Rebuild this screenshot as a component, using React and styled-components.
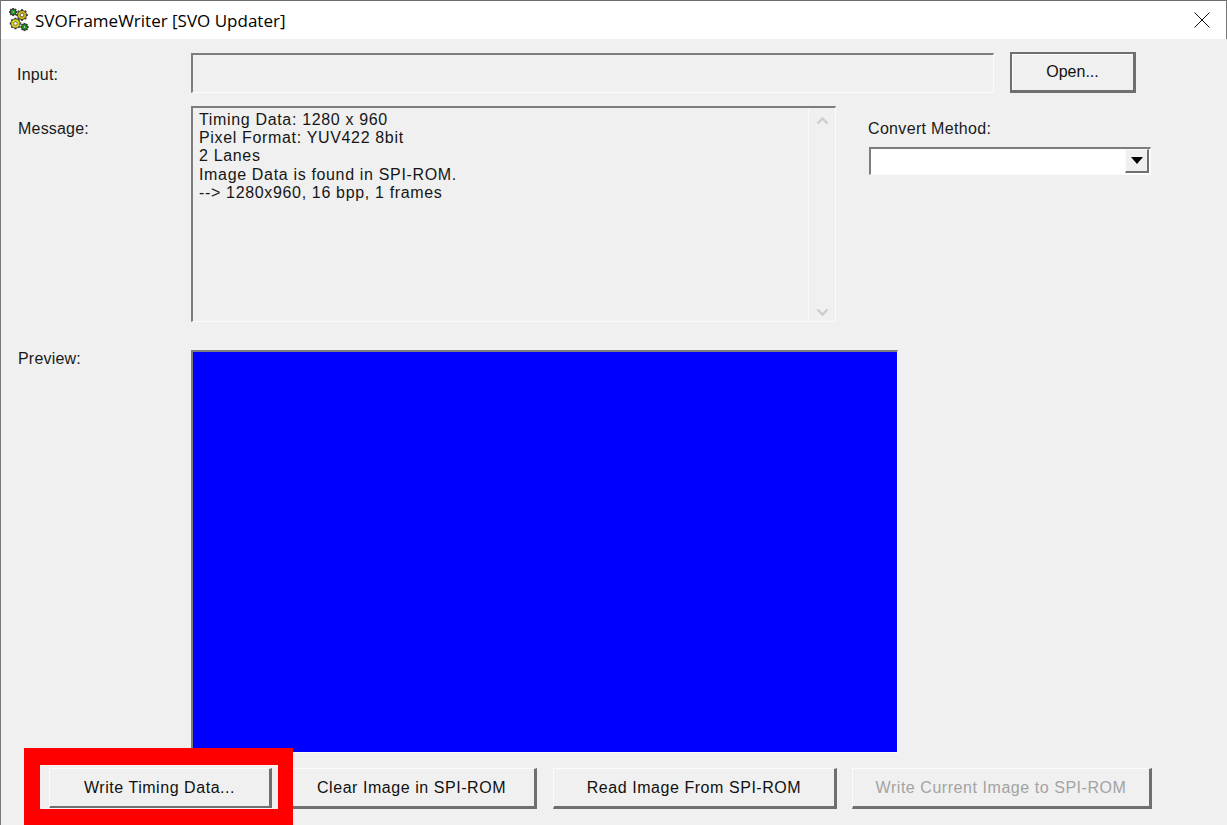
import React from "react";
import styled, { createGlobalStyle } from "styled-components";

const Global = createGlobalStyle`
  html, body { margin: 0; padding: 0; height: 825px; overflow: hidden; background: #f0f0f0; }
  #root { height: 825px; }
  * { box-sizing: border-box; }
`;

const Win = styled.div`
  width: 1227px; height: 825px; overflow: hidden; display: flex; flex-direction: column;
  background: #f0f0f0; border-left: 1px solid #777;
  font-family: "Liberation Sans", Arial, sans-serif; font-size: 16px; color: #1a1a1a;
`;
const TitleBar = styled.div`
  height: 39px; flex: none; background: #fff; border-top: 1px solid #6d6d6d; border-right: 1px solid #777;
  display: flex; align-items: center; padding: 0 16px 0 7px; gap: 5px;
`;
const Title = styled.div`
  flex: 1; font-family: "Open Sans", "Noto Sans", sans-serif; font-size: 17px; color: #000; padding-top: 1px;
`;
const Client = styled.div`
  flex: 1; display: flex; flex-direction: column; padding: 14px 0 0 16px; position: relative;
`;
const Row = styled.div`
  display: flex; align-items: flex-start;
`;
const Label = styled.div`
  width: 174px; flex: none; height: 20px; line-height: 20px; letter-spacing: 0.2px; margin-top: ${p => p.$top}px; padding-left: ${p => p.$pad || 0}px;
`;
const Sunken = styled.div`
  border-style: solid; border-width: 2px 1px 1px 2px; border-color: #7d7d7d #fbfbfb #fbfbfb #7d7d7d;
`;
const InputField = styled(Sunken)`
  width: 803px; height: 40px; background: #f0f0f0;
`;
const RaisedButton = styled.button`
  font: inherit; font-size: 16px; letter-spacing: 0.55px; height: 41px; padding: 0; margin: 0;
  width: ${p => p.$w}px; background: #f0f0f0; color: ${p => (p.disabled ? "#a3a3a3" : "#111")};
  border-style: solid; border-width: 1px 3px 3px 1px; border-color: #fbfbfb #6f6f6f #6f6f6f #fbfbfb;
  white-space: nowrap;
`;
const OpenButton = styled(RaisedButton)`
  margin-left: 16px; margin-top: -1px; letter-spacing: 0; border: 2px solid #6f6f6f; border-bottom-width: 3px; border-right-width: 3px;
  box-shadow: inset 1px 1px 0 #fbfbfb;
`;
const MessageRow = styled(Row)`
  margin-top: 13px;
`;
const MessageBox = styled(Sunken)`
  width: 645px; height: 216px; display: flex; background: #f0f0f0;
`;
const MessageText = styled.div`
  flex: 1; padding: 3px 0 0 6px; line-height: 18.2px; letter-spacing: 0.66px; white-space: pre; color: #161616;
`;
const ScrollBar = styled.div`
  width: 27px; border-left: 1px solid #f8f8f8; display: flex; flex-direction: column; justify-content: space-between; align-items: center; padding: 8px 0 4px;
`;
const SideColumn = styled.div`
  margin-left: 32px; padding-top: 13px; width: 283px;
`;
const SideLabel = styled.div`
  height: 20px; line-height: 20px; letter-spacing: 0.33px;
`;
const Combo = styled(Sunken)`
  width: 282px; height: 28px; margin: 8px 0 0 1px; background: #fff; display: flex; justify-content: flex-end; padding: 0 1px 0 0;
`;
const ComboArrow = styled.div`
  width: 24px; height: 24px; background: #f0f0f0; border-style: solid; border-width: 1px 2px 2px 1px; border-color: #fbfbfb #6f6f6f #6f6f6f #fbfbfb;
  display: flex; align-items: center; justify-content: center;
`;
const PreviewRow = styled(Row)`
  margin-top: 28px;
`;
const Preview = styled(Sunken)`
  width: 707px; height: 403px; background: #0000ff;
`;
const ButtonRow = styled.div`
  display: flex; gap: 16px; margin-top: 15px; padding-left: 32px; position: relative;
`;
const LastButton = styled(RaisedButton)`
  margin-left: -1px;
`;
const Highlight = styled.div`
  position: absolute; left: 7px; top: -20px; width: 269px; height: 81px; border: solid #ff0000; border-width: 17px 15px 20px 16px; pointer-events: none;
  &::after { content: ""; position: absolute; inset: 0; border: 1px solid #fdf2f2; }
`;

const Gear = ({ cx, cy, r, fill, hole }) => {
  const teeth = [0, 45, 90, 135, 180, 225, 270, 315];
  return (
    <g>
      {teeth.map(a => (
        <rect key={a} x={cx - 1} y={cy - r - 1.2} width="2" height="2.4" fill="#3a3a3a" transform={`rotate(${a} ${cx} ${cy})`} />
      ))}
      <circle cx={cx} cy={cy} r={r} fill={fill} stroke="#2b2b2b" strokeWidth="0.8" />
      <circle cx={cx} cy={cy} r={hole} fill="#fff" stroke="#333" strokeWidth="0.6" />
    </g>
  );
};

const GearsIcon = () => (
  <svg width="22" height="24" viewBox="8 8 22 24" style={{ marginTop: -1 }}>
    <Gear cx={22} cy={15} r={4.6} fill="#c9b21d" hole={1.8} />
    <Gear cx={15.5} cy={23.5} r={4.6} fill="#d8d21c" hole={1.8} />
    <Gear cx={13.2} cy={12} r={2.9} fill="#12b312" hole={1.1} />
    <Gear cx={24.5} cy={27} r={2.9} fill="#12b312" hole={1.1} />
  </svg>
);

const CloseIcon = () => (
  <svg width="16" height="16" viewBox="0 0 16 16">
    <path d="M0.5 0.5 L15.5 15.5 M15.5 0.5 L0.5 15.5" stroke="#111" strokeWidth="1" fill="none" />
  </svg>
);

const Chevron = ({ up }) => (
  <svg width="13" height="9" viewBox="0 0 13 9">
    <path d={up ? "M1.5 7.5 L6.5 2.5 L11.5 7.5" : "M1.5 1.5 L6.5 6.5 L11.5 1.5"} stroke="#cdcdcd" strokeWidth="2.4" fill="none" />
  </svg>
);

const DownTriangle = () => (
  <svg width="12" height="7" viewBox="0 0 12 7">
    <path d="M0 0 H12 L6 7 Z" fill="#000" />
  </svg>
);

const message = `Timing Data: 1280 x 960
Pixel Format: YUV422 8bit
2 Lanes
Image Data is found in SPI-ROM.
--> 1280x960, 16 bpp, 1 frames`;

export default function App() {
  return (
    <Win>
      <Global />
      <TitleBar>
        <GearsIcon />
        <Title>SVOFrameWriter [SVO Updater]</Title>
        <CloseIcon />
      </TitleBar>
      <Client>
        <Row>
          <Label $top={12}>Input:</Label>
          <InputField />
          <OpenButton $w={126}>Open...</OpenButton>
        </Row>
        <MessageRow>
          <Label $top={13} $pad={1}>Message:</Label>
          <MessageBox>
            <MessageText>{message}</MessageText>
            <ScrollBar>
              <Chevron up />
              <Chevron />
            </ScrollBar>
          </MessageBox>
          <SideColumn>
            <SideLabel>Convert Method:</SideLabel>
            <Combo>
              <ComboArrow><DownTriangle /></ComboArrow>
            </Combo>
          </SideColumn>
        </MessageRow>
        <PreviewRow>
          <Label $top={-1} $pad={1}>Preview:</Label>
          <Preview />
        </PreviewRow>
        <ButtonRow>
          <RaisedButton $w={223}>Write Timing Data...</RaisedButton>
          <RaisedButton $w={249}>Clear Image in SPI-ROM</RaisedButton>
          <RaisedButton $w={284}>Read Image From SPI-ROM</RaisedButton>
          <LastButton $w={300} disabled>Write Current Image to SPI-ROM</LastButton>
          <Highlight />
        </ButtonRow>
      </Client>
    </Win>
  );
}
